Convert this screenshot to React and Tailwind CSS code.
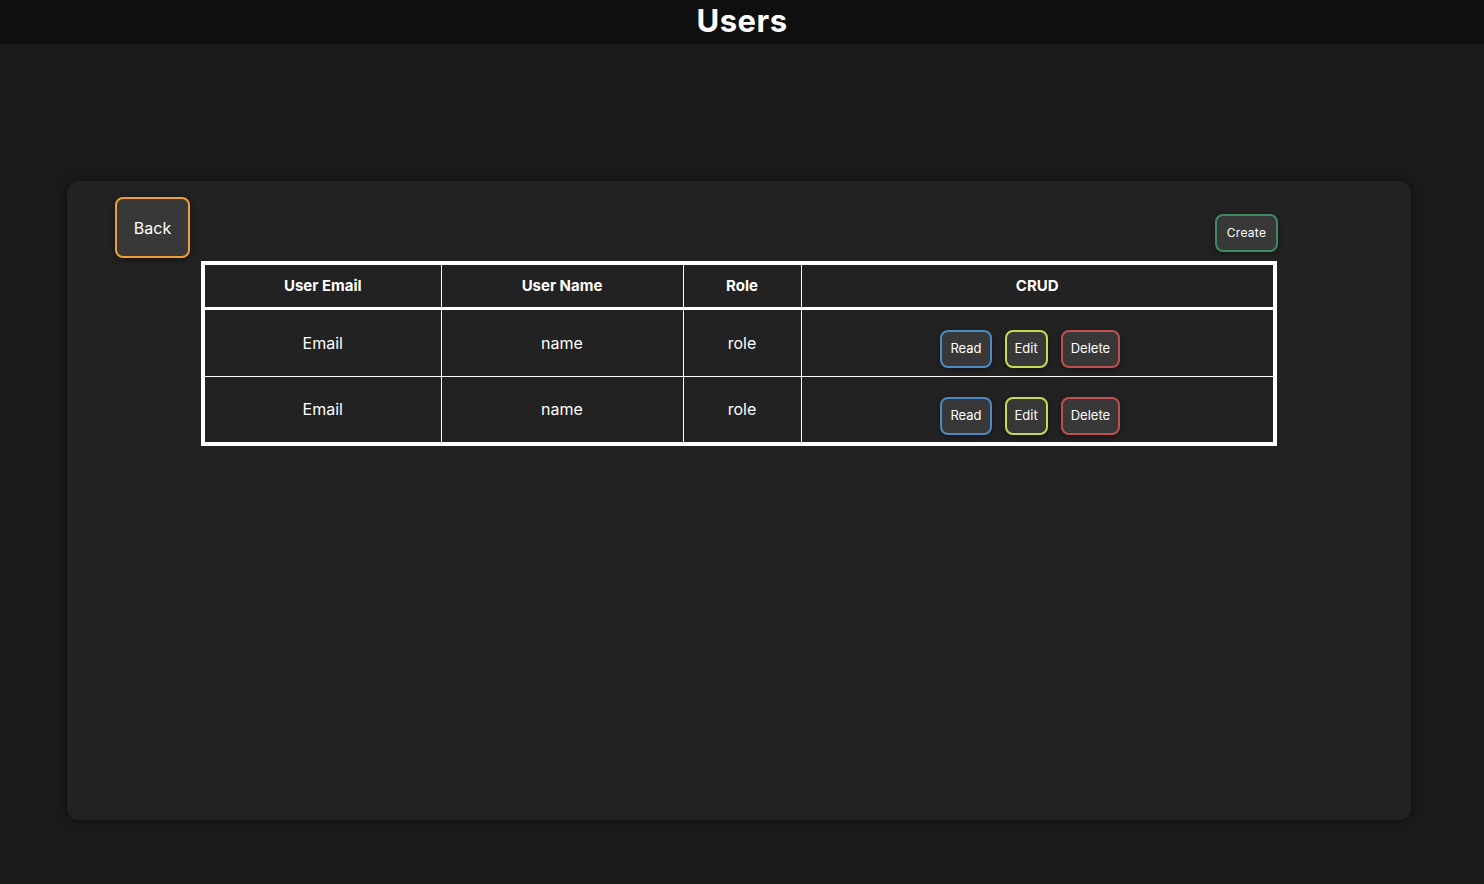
import React from 'react';

const users = [
	{ email: 'Email', name: 'name', role: 'role' },
	{ email: 'Email', name: 'name', role: 'role' }
];

const CrudButton = ({ label, color }) => (
	<button className={`h-[38px] px-[8px] rounded-[8px] border-2 bg-[#383838] text-white text-[13px] shadow-[0_2px_6px_rgba(0,0,0,0.35)] ${color}`}>
		{label}
	</button>
);

const App = () => {
	return (
		<div className="min-h-screen bg-[#1a1a1a] text-white font-['Inter','Liberation_Sans',sans-serif]">
			<header className="h-[44px] bg-[#0f0f0f] flex items-center justify-center pb-[4px]">
				<h1 className="text-[31px] font-bold tracking-[0.5px] leading-none">Users</h1>
			</header>
			<div className="pt-[137px] pl-[67px]">
				<div className="w-[1344px] h-[639px] bg-[#222222] rounded-[12px] shadow-[0_0_8px_rgba(0,0,0,0.45)] flex pt-[16px] pl-[48px] gap-[11px]">
					<button className="self-start w-[75px] h-[61px] rounded-[8px] border-2 border-[#f0a032] bg-[#383838] text-[16px] shadow-[0_2px_8px_rgba(0,0,0,0.4)]">
						Back
					</button>
					<div className="w-[1076px] flex flex-col">
						<div className="flex justify-end mt-[17px]">
							<button className="h-[38px] w-[63px] mr-[-1px] rounded-[8px] border-2 border-[#3e8a62] bg-[#383838] text-[12px] tracking-[0.3px] shadow-[0_2px_6px_rgba(0,0,0,0.35)]">
								Create
							</button>
						</div>
						<table className="mt-[9px] w-[1076px] border-collapse border-4 border-white table-fixed">
							<colgroup>
								<col className="w-[238px]" />
								<col className="w-[242px]" />
								<col className="w-[118px]" />
								<col />
							</colgroup>
							<thead>
								<tr className="border-b-[3px] border-white h-[45px]">
									<th className="border border-white text-[15px] font-bold">User Email</th>
									<th className="border border-white text-[15px] font-bold">User Name</th>
									<th className="border border-white text-[15px] font-bold">Role</th>
									<th className="border border-white text-[15px] font-bold">CRUD</th>
								</tr>
							</thead>
							<tbody>
								{users.map((u, i) => (
									<tr key={i} className="h-[68px]">
										<td className="border border-white text-center text-[16px]">{u.email}</td>
										<td className="border border-white text-center text-[16px]">{u.name}</td>
										<td className="border border-white text-center text-[16px]">{u.role}</td>
										<td className="border border-white">
											<div className="flex justify-center gap-[13px] pt-[13px] pr-[14px]">
												<CrudButton label="Read" color="border-[#4c8ac4]" />
												<CrudButton label="Edit" color="border-[#c8da52]" />
												<CrudButton label="Delete" color="border-[#c25050]" />
											</div>
										</td>
									</tr>
								))}
							</tbody>
						</table>
					</div>
				</div>
			</div>
		</div>
	);
};

export default App;
